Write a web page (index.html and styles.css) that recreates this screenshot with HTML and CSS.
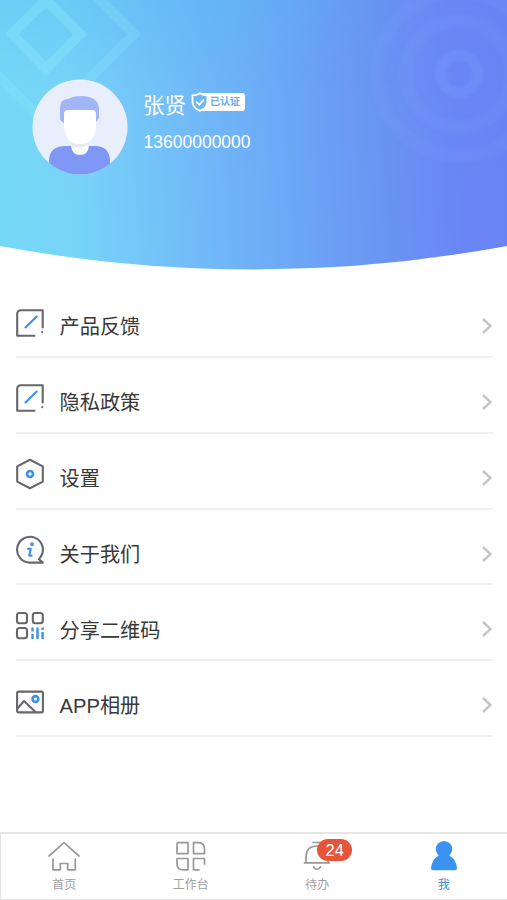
FILE: index.html
```html
<!DOCTYPE html>
<html lang="zh-CN">
<head>
<meta charset="utf-8">
<meta name="viewport" content="width=device-width, initial-scale=1">
<title>我</title>
<link rel="stylesheet" href="styles.css">
</head>
<body>
<div class="app">
  <header class="hero">
    <svg class="hero-bg" viewBox="0 0 507 271" aria-hidden="true">
      <defs>
        <linearGradient id="sky" gradientUnits="userSpaceOnUse" x1="0" y1="150" x2="507" y2="118">
          <stop offset="0" stop-color="#76d8f7"/>
          <stop offset=".14" stop-color="#77d4f8"/>
          <stop offset=".35" stop-color="#72bdf8"/>
          <stop offset=".55" stop-color="#6ca9f6"/>
          <stop offset=".76" stop-color="#6993f3"/>
          <stop offset=".9" stop-color="#6a86f5"/>
          <stop offset="1" stop-color="#6983f5"/>
        </linearGradient>
        <linearGradient id="glow" x1="0" y1="0" x2="0" y2="1">
          <stop offset="0" stop-color="#48b8f2" stop-opacity=".26"/>
          <stop offset="1" stop-color="#48b8f2" stop-opacity="0"/>
        </linearGradient>
        <linearGradient id="fade" x1="0" y1="0" x2="1" y2="0">
          <stop offset="0" stop-color="#fff"/>
          <stop offset=".45" stop-color="#fff"/>
          <stop offset=".8" stop-color="#000"/>
        </linearGradient>
        <mask id="left"><rect width="507" height="100" fill="url(#fade)"/></mask>
        <clipPath id="wave"><path d="M0 0H507V246Q380 269.5 253 269.5Q126 269.5 0 246Z"/></clipPath>
      </defs>
      <g clip-path="url(#wave)">
        <rect width="507" height="271" fill="url(#sky)"/>
        <rect width="507" height="90" fill="url(#glow)" mask="url(#left)"/>
        <g class="diamonds">
          <path d="M46 0L80 34L46 69L12 34Z"/>
          <path class="faint" d="M-10 68L46 124"/>
          <path class="faint" d="M96 -4L134 34L46 122"/>
        </g>
        <g class="rings">
          <circle class="inner" cx="459" cy="74" r="18.5"/>
          <circle cx="459" cy="74" r="53"/>
          <circle cx="459" cy="74" r="82"/>
        </g>
      </g>
    </svg>
    <div class="profile">
      <svg class="avatar" viewBox="0 0 96 96" aria-hidden="true">
        <defs><clipPath id="disc"><circle cx="48" cy="48" r="47.5"/></clipPath></defs>
        <g clip-path="url(#disc)">
          <rect width="96" height="96" fill="#e9eefc"/>
          <path d="M17 96V81Q18 67 33 67H63Q77 67 78 81V96Z" fill="#8098f5"/>
          <path d="M39 60H57V67Q56 76 48 76Q40 76 39 67Z" fill="#fafbfe"/>
          <path d="M39 61H57V65Q51 70 39 68Z" fill="#e6eaf6"/>
          <path d="M28 40V29Q28 20 36 20Q41 17 49 17Q67 17 67 31V39Q66 42 62 44H33Q29 43 28 40Z" fill="#a1b6f6"/>
          <path d="M32 35Q32 31 36 31H60Q64 31 64 35V47Q63 65 48 65Q33 65 32 47Z" fill="#fff"/>
        </g>
      </svg>
      <div class="identity">
        <div class="name-line">
          <span class="name">张贤</span>
          <span class="verified">
            <svg class="shield" viewBox="0 0 18 20" aria-hidden="true">
              <path d="M9 1.2Q12 3.2 16.5 3.4V10Q16 16 9 18.8Q2 16 1.5 10V3.4Q6 3.2 9 1.2Z" fill="#6cb9f6" stroke="#fff" stroke-width="1.9"/>
              <path d="M5.2 9.6L8.3 12.6L13 7.6" fill="none" stroke="#fff" stroke-width="1.9"/>
            </svg>
            <span class="verified-text">已认证</span>
          </span>
        </div>
        <div class="phone">13600000000</div>
      </div>
    </div>
  </header>

  <main class="menu">
    <a class="row">
      <svg class="icon" viewBox="0 0 30 32"><path class="line" d="M19.5 28.8H2.2V7Q2.2 3.2 6 3.2H27.7V20.5"/><path class="line" d="M27.2 25V25.3"/><path class="accent" d="M10.5 20.5L21.7 9.5"/></svg>
      <span class="label">产品反馈</span>
      <svg class="chevron" viewBox="0 0 12 18"><path d="M2 2L9.5 9L2 16"/></svg>
    </a>
    <a class="row">
      <svg class="icon" viewBox="0 0 30 32"><path class="line" d="M19.5 28.8H2.2V7Q2.2 3.2 6 3.2H27.7V20.5"/><path class="line" d="M27.2 25V25.3"/><path class="accent" d="M10.5 20.5L21.7 9.5"/></svg>
      <span class="label">隐私政策</span>
      <svg class="chevron" viewBox="0 0 12 18"><path d="M2 2L9.5 9L2 16"/></svg>
    </a>
    <a class="row">
      <svg class="icon" viewBox="0 0 30 32"><path class="line" d="M15 1.8L27.8 8.4V23.6L15 30.2L2.2 23.6V8.4Z"/><circle class="accent dot" cx="15" cy="16" r="3"/></svg>
      <span class="label">设置</span>
      <svg class="chevron" viewBox="0 0 12 18"><path d="M2 2L9.5 9L2 16"/></svg>
    </a>
    <a class="row">
      <svg class="icon" viewBox="0 0 30 32"><path class="line" d="M27.8 28.6H15A12.9 12.9 0 1 1 25.5 23.2L24 25.2Z"/><circle class="fill" cx="17" cy="10.2" r="1.9"/><path class="accent" d="M12.8 14.8H15.8L14.2 21.6H16.6"/></svg>
      <span class="label">关于我们</span>
      <svg class="chevron" viewBox="0 0 12 18"><path d="M2 2L9.5 9L2 16"/></svg>
    </a>
    <a class="row">
      <svg class="icon" viewBox="0 0 30 32"><g class="line"><rect x="2" y="3" width="10" height="10.2" rx="2.5"/><rect x="17.8" y="3" width="10" height="10.2" rx="2.5"/><rect x="2" y="18" width="10" height="10.2" rx="2.5"/></g><path class="accent bars" d="M17.5 17.5V21.5M17.5 24V29M22.5 17.5V29M27.6 17.5V20M27.6 22V29"/></svg>
      <span class="label">分享二维码</span>
      <svg class="chevron" viewBox="0 0 12 18"><path d="M2 2L9.5 9L2 16"/></svg>
    </a>
    <a class="row">
      <svg class="icon" viewBox="0 0 30 32"><rect class="line" x="2.1" y="5.6" width="25.8" height="20.8" rx="1.5"/><path class="line" d="M2.5 22.5L9 15L20.5 26"/><circle class="accent dot" cx="20.4" cy="13" r="2.9"/></svg>
      <span class="label">APP相册</span>
      <svg class="chevron" viewBox="0 0 12 18"><path d="M2 2L9.5 9L2 16"/></svg>
    </a>
  </main>

  <nav class="tabs">
    <a class="tab">
      <svg class="tab-icon" viewBox="0 0 32 32"><path d="M1 16L16 2.7L31 16M5 19V29.8H12.3V23.5H19.7V29.8H27.3V19"/></svg>
      <span>首页</span>
    </a>
    <a class="tab">
      <svg class="tab-icon" viewBox="0 0 32 32"><path d="M3.5 2.6H13V13.6H2V4Q2 2.6 3.5 2.6ZM18.5 2.6H23.5Q29.5 3 29.5 9V13.6H18.5ZM2 18.5H13V29.8H8Q2 29.8 2 24ZM24 29.8H18.5V18.5H29.5V24"/></svg>
      <span>工作台</span>
    </a>
    <a class="tab">
      <span class="icon-wrap">
        <svg class="tab-icon" viewBox="0 0 32 32"><path d="M12 2.5H20M3.5 22.8H28.5M5 22.5V17Q5 6 16 6Q27 6 27 17V22.5M12.5 27Q16 31.5 19.5 27"/></svg>
        <span class="badge">24</span>
      </span>
      <span>待办</span>
    </a>
    <a class="tab active">
      <svg class="tab-icon" viewBox="0 0 32 32"><path d="M10.8 15.5A8.2 8.2 0 1 1 21.2 15.5Q28 19 29 28Q29 30.3 27 30.3H5Q3 30.3 3 28Q4 19 10.8 15.5Z"/></svg>
      <span>我</span>
    </a>
  </nav>
</div>
</body>
</html>
```

FILE: styles.css
```css
* {
  box-sizing: border-box;
}

body {
  margin: 0;
  background: #fff;
  color: #383838;
  font-family: "Liberation Sans", "Noto Sans CJK SC", sans-serif;
}

.app {
  display: flex;
  flex-direction: column;
  height: 900px;
  overflow: hidden;
}

.hero {
  display: grid;
  flex: none;
  height: 282.3px;
}

.hero-bg,
.profile {
  grid-area: 1 / 1;
}

.hero-bg {
  display: block;
  width: 100%;
  height: 271px;
}

.diamonds,
.rings {
  fill: none;
}

.diamonds {
  stroke: #8ce8fb;
  stroke-width: 10;
  stroke-opacity: .36;
  filter: blur(.6px);
}

.diamonds .faint {
  stroke-opacity: .25;
}

.rings {
  stroke: #7fa2ff;
  stroke-width: 14;
  stroke-opacity: .14;
  filter: blur(1.8px);
}

.rings .inner {
  stroke-width: 11;
  stroke-opacity: .25;
}

.profile {
  display: flex;
  gap: 15px;
  padding: 79px 0 0 32px;
  z-index: 1;
  color: #fff;
}

.avatar {
  width: 96px;
  height: 96px;
}

.identity {
  padding-top: 9px;
}

.name-line {
  display: flex;
  align-items: center;
  gap: 5px;
  height: 34px;
}

.name {
  padding-top: 1px;
  font-size: 21.5px;
  line-height: 34px;
  font-weight: 400;
}

.verified {
  display: flex;
  align-items: center;
  height: 20px;
  margin-top: -6px;
}

.shield {
  width: 18px;
  height: 20px;
  z-index: 1;
}

.verified-text {
  width: 45px;
  height: 18px;
  margin-left: -9px;
  padding-left: 10px;
  border-radius: 3px;
  background: #fff;
  color: #67acec;
  font-size: 10px;
  font-weight: 700;
  line-height: 18px;
  white-space: nowrap;
}

.phone {
  margin: 10px 0 0 .5px;
  font-size: 17.5px;
  line-height: 20px;
}

.menu {
  flex: none;
  padding: 0 14.5px 0 16px;
}

.row {
  display: flex;
  align-items: center;
  height: 75.8px;
  padding-top: 14px;
  border-bottom: 2px solid #f0f0f0;
}

.icon {
  width: 30px;
  height: 32px;
  margin: -7px 14.5px 0 -1px;
}

.icon .line,
.icon .accent,
.chevron path {
  fill: none;
  stroke-width: 2.1;
  stroke-linejoin: round;
  stroke-linecap: round;
}

.icon .line {
  stroke: #65676d;
}

.icon .accent {
  stroke: #3c91ec;
}

.icon .dot {
  stroke-width: 2.6;
}

.icon .bars {
  stroke-width: 2.4;
  stroke-linecap: butt;
}

.icon .fill {
  fill: #3c91ec;
}

.label {
  flex: 1;
  margin-top: 2.6px;
  font-size: 20.2px;
  line-height: 30px;
}

.chevron {
  width: 12px;
  height: 18px;
}

.chevron path {
  stroke: #c5c5c5;
  stroke-width: 2.4;
  stroke-linecap: butt;
  stroke-linejoin: miter;
}

.tabs {
  display: grid;
  grid-template-columns: repeat(4, 1fr);
  height: 68px;
  margin-top: auto;
  border: solid #e6e6e6;
  border-width: 2px 0 1px 1px;
}

.tab {
  display: flex;
  flex-direction: column;
  align-items: center;
  padding-top: 6px;
  color: #a0a0a0;
  font-size: 12px;
  line-height: 18px;
}

.tab > span:last-child {
  margin-top: 4px;
}

.tab-icon {
  display: block;
  width: 32px;
  height: 32px;
  fill: none;
  stroke: #999;
  stroke-width: 1.7;
  stroke-linecap: round;
  stroke-linejoin: round;
}

.icon-wrap {
  position: relative;
}

.badge {
  position: absolute;
  top: -1px;
  left: 16px;
  width: 35px;
  height: 22px;
  border-radius: 11px;
  background: #e45539;
  color: #fff;
  font-size: 16.5px;
  line-height: 22px;
  text-align: center;
}

.active {
  color: #3889cc;
}

.active .tab-icon {
  fill: #3b92f1;
  stroke: none;
}
```
